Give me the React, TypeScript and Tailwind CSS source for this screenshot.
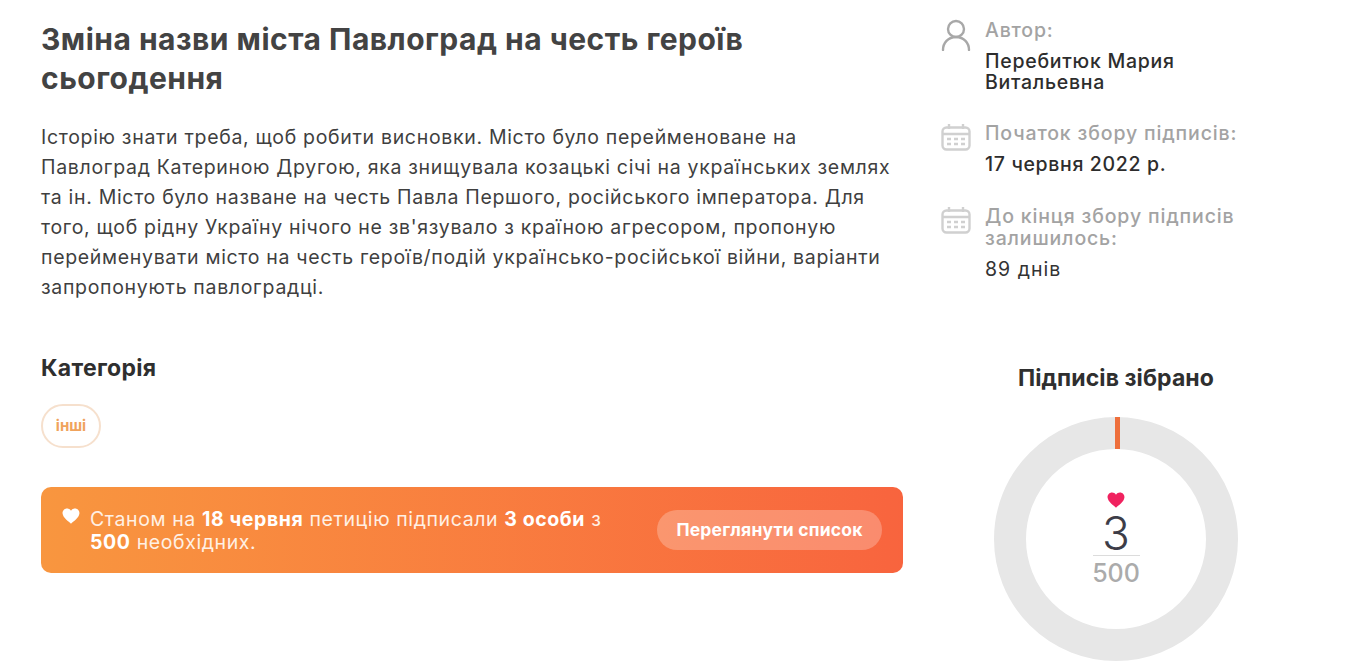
const font = { fontFamily: "Inter, 'Noto Sans', sans-serif" };

function Heart({ className, fill }: { className: string; fill: string }) {
  return (
    <svg viewBox="0 0 24 22" className={className}>
      <path fill={fill} d="M12 21.5C9 19 1 13.5.4 7.6.1 3.6 3 .6 6.5.6 8.8.6 10.800 1.800 12 3.800 13.200 1.800 15.200.6 17.500.6 21 .6 23.900 3.600 23.600 7.600 23 13.500 15 19 12 21.500Z" />
    </svg>
  );
}

function Calendar() {
  return (
    <svg viewBox="0 0 30 27" className="w-[30px] h-[27px] shrink-0" fill="none" stroke="#d0d0d0" strokeWidth="2.400">
      <rect x="1.500" y="3.500" width="27" height="22" rx="4" />
      <path d="M1.500 10h27M8 0v5M22 0v5" />
      <path d="M6 15h4M13 15h4M20 15h4M6 20h4M13 20h4M20 20h4" strokeWidth="2.600" />
    </svg>
  );
}

function Person() {
  return (
    <svg viewBox="0 0 30 32" className="w-[30px] h-[32px] shrink-0" fill="none" stroke="#a8a8a8" strokeWidth="2.400" strokeLinecap="round">
      <circle cx="15" cy="10" r="8" />
      <path d="M2 31c0-7 5-13 13-13s13 6 13 13" />
    </svg>
  );
}

export default function App() {
  return (
    <div style={font} className="w-[1368px] h-[671px] overflow-hidden bg-white flex pl-[41px] text-[#333]">
      <main className="w-[862px] shrink-0 pt-[20px]">
        <h1 className="text-[30px] leading-[39px] font-bold text-[#434343] tracking-[0.48px] whitespace-nowrap">
          Зміна назви міста Павлоград на честь героїв<br />сьогодення
        </h1>
        <p className="mt-[24px] text-[19.500px] leading-[30px] text-[#3f3f3f] tracking-[0.68px] whitespace-nowrap">
          Історію знати треба, щоб робити висновки. Місто було перейменоване на<br />
          Павлоград Катериною Другою, яка знищувала козацькі січі на українських землях<br />
          та ін. Місто було назване на честь Павла Першого, російського імператора. Для<br />
          того, щоб рідну Україну нічого не зв'язувало з країною агресором, пропоную<br />
          перейменувати місто на честь героїв/подій українсько-російської війни, варіанти<br />
          запропонують павлоградці.
        </p>
        <h2 className="mt-[51px] text-[23px] leading-[30px] font-bold text-[#2f2f2f] tracking-[0.3px]">Категорія</h2>
        <div className="mt-[21px] w-[60px] h-[44px] rounded-[22px] border-2 border-[#f6e0cd] flex items-center justify-center text-[15px] font-bold text-[#f0a35c]">
          інші
        </div>
        <div className="mt-[39px] h-[86px] rounded-[10px] bg-gradient-to-r from-[#f8963f] to-[#f8643e] flex items-center justify-between pl-[21px] pr-[21px]">
          <div className="flex items-start gap-[10px] text-white">
            <Heart className="w-[18px] h-[16px] mt-[2px] shrink-0" fill="#fff" />
            <p className="mt-[2px] text-[19.500px] leading-[23px] tracking-[0.6px] text-[#fff0e4] whitespace-nowrap">
              Станом на <b className="text-white font-bold">18 червня</b> петицію підписали <b className="text-white font-bold">3 особи</b> з<br />
              <b className="text-white font-bold">500</b> необхідних.
            </p>
          </div>
          <button style={font} className="w-[225px] h-[40px] rounded-[20px] bg-white/25 text-white text-[17.500px] tracking-[0.2px] font-bold">
            Переглянути список
          </button>
        </div>
      </main>
      <aside className="ml-[38px] w-[350px] pt-[19px]">
        <div className="flex gap-[14px]">
          <Person />
          <div className="text-[19.500px]">
            <div className="leading-[22px] font-medium text-[#a3a3a3] tracking-[0.8px]">Автор:</div>
            <div className="mt-[10px] leading-[21px] font-medium text-[#2d2d2d] tracking-[0.73px]">Перебитюк Мария<br />Витальевна</div>
          </div>
        </div>
        <div className="mt-[28px] flex gap-[14px] text-[19.500px]">
          <div className="pt-[3px]"><Calendar /></div>
          <div>
            <div className="leading-[24px] font-medium text-[#a3a3a3] tracking-[0.85px]">Початок збору підписів:</div>
            <div className="mt-[7px] leading-[24px] font-medium text-[#2d2d2d] tracking-[0.65px]">17 червня 2022 р.</div>
          </div>
        </div>
        <div className="mt-[29px] flex gap-[14px] text-[19.500px]">
          <div className="pt-[2px]"><Calendar /></div>
          <div>
            <div className="leading-[22px] font-medium text-[#a3a3a3] tracking-[0.85px]">До кінця збору підписів<br />залишилось:</div>
            <div className="mt-[8px] leading-[24px] text-[#333] tracking-[1px]">89 днів</div>
          </div>
        </div>
        <div className="mt-[82px]">
          <h2 className="ml-[53px] w-[244px] text-center text-[23px] leading-[30px] font-bold text-[#2f2f2f] tracking-[0.1px] whitespace-nowrap">Підписів зібрано</h2>
          <div className="relative mt-[24px] ml-[53px] w-[244px] h-[244px]">
            <svg viewBox="0 0 244 244" className="w-[244px] h-[244px]">
              <circle cx="122" cy="122" r="106" fill="none" stroke="#e7e7e7" strokeWidth="32" />
              <rect x="121" y="0" width="5" height="32" fill="#ee6f3c" />
            </svg>
            <div className="absolute left-[72px] top-[75px] w-[100px] flex flex-col items-center">
              <Heart className="w-[18px] h-[16px]" fill="#f0225f" />
              <div className="text-[46px] leading-[42px] font-light text-[#3d3d48] mt-[4px]">3</div>
              <div className="w-[47px] h-px bg-[#dcdcdc] mt-[1px]" />
              <div className="text-[25px] leading-[28px] font-medium text-[#ababab] mt-[3px]">500</div>
            </div>
          </div>
        </div>
      </aside>
    </div>
  );
}
